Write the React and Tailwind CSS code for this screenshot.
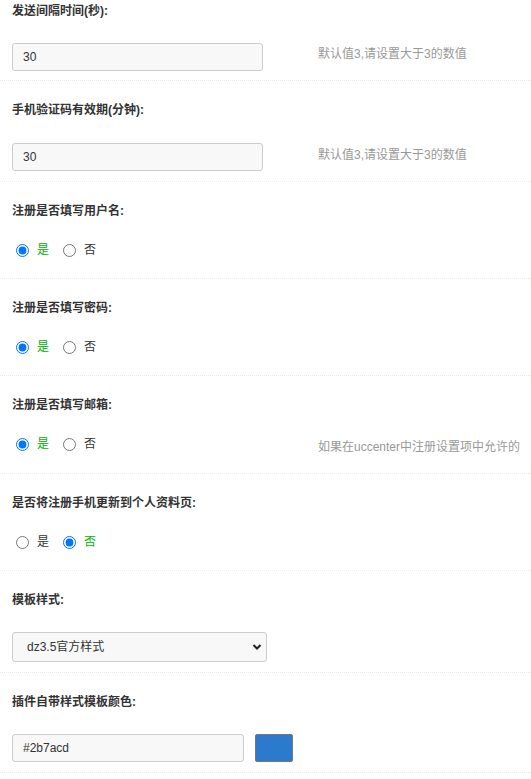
import { useState } from 'react';

const font = { fontFamily: '"Liberation Sans", "Noto Sans CJK SC", sans-serif' };

const Label = ({ children }) => (
  <div className="h-4 text-xs leading-4 font-bold text-[#333]">{children}</div>
);

const Hint = ({ children, className = '' }) => (
  <div className={`absolute left-[306px] whitespace-nowrap text-xs leading-4 text-[#999] ${className}`}>
    {children}
  </div>
);

const TextInput = ({ value, className = 'w-[251px]' }) => (
  <input
    defaultValue={value}
    className={`h-[28px] rounded-[3px] border border-[#ccc] bg-[#f8f8f8] px-[10px] text-xs text-[#333] outline-none ${className}`}
  />
);

const RadioGroup = ({ name, initial }) => {
  const [value, setValue] = useState(initial);
  const opt = (v, text, extra) => (
    <label className={`flex items-center ${extra}`}>
      <input
        type="radio"
        name={name}
        checked={value === v}
        onChange={() => setValue(v)}
        className="m-0 h-[13px] w-[13px]"
      />
      <span className={`ml-[8px] text-xs leading-4 ${value === v ? 'text-[#00b400]' : 'text-[#333]'}`}>{text}</span>
    </label>
  );
  return (
    <div className="flex h-4 items-center pl-[4px]">
      {opt('1', '是', '')}
      {opt('0', '否', 'ml-[14px]')}
    </div>
  );
};

const Row = ({ children, className = '' }) => (
  <div className={`relative border-b border-dotted border-[#dcecf8] px-3 ${className}`}>{children}</div>
);

export default function App() {
  return (
    <div className="w-full overflow-hidden bg-white" style={font}>
      <Row className="pt-[3px] pb-[9px]">
        <Label>发送间隔时间(秒):</Label>
        <div className="relative mt-6 flex items-center">
          <TextInput value="30" />
          <Hint className="top-[3px]">默认值3,请设置大于3的数值</Hint>
        </div>
      </Row>

      <Row className="pt-[21px] pb-[10px]">
        <Label>手机验证码有效期(分钟):</Label>
        <div className="relative mt-[25px] flex items-center">
          <TextInput value="30" />
          <Hint className="top-[4px]">默认值3,请设置大于3的数值</Hint>
        </div>
      </Row>

      <Row className="pt-[21px] pb-[20px]">
        <Label>注册是否填写用户名:</Label>
        <div className="mt-[23px]">
          <RadioGroup name="username" initial="1" />
        </div>
      </Row>

      <Row className="pt-[21px] pb-[20px]">
        <Label>注册是否填写密码:</Label>
        <div className="mt-[23px]">
          <RadioGroup name="password" initial="1" />
        </div>
      </Row>

      <Row className="pt-[21px] pb-[21px]">
        <Label>注册是否填写邮箱:</Label>
        <div className="relative mt-[23px]">
          <RadioGroup name="email" initial="1" />
          <Hint className="top-[3px]">如果在uccenter中注册设置项中允许的</Hint>
        </div>
      </Row>

      <Row className="pt-[21px] pb-[20px]">
        <Label>是否将注册手机更新到个人资料页:</Label>
        <div className="mt-[23px]">
          <RadioGroup name="profile" initial="0" />
        </div>
      </Row>

      <Row className="pt-[21px] pb-[10px]">
        <Label>模板样式:</Label>
        <div className="relative mt-6 w-[255px]">
          <select
            defaultValue="dz35"
            className="h-[30px] w-full appearance-none rounded-[3px] border border-[#ccc] bg-[#f8f8f8] pl-[14px] text-xs text-[#333] outline-none"
          >
            <option value="dz35">dz3.5官方样式</option>
          </select>
          <svg
            className="pointer-events-none absolute right-[5px] top-[11px]"
            width="10"
            height="8"
            viewBox="0 0 10 8"
          >
            <path d="M1.5 2 L5 5.5 L8.5 2" fill="none" stroke="#222" strokeWidth="2" />
          </svg>
        </div>
      </Row>

      <Row className="pt-[21px] pb-[10px]">
        <Label>插件自带样式模板颜色:</Label>
        <div className="mt-6 flex items-center">
          <TextInput value="#2b7acd" className="w-[232px]" />
          <div className="ml-[11px] h-[28px] w-[38px] rounded-[2px] border border-[#777] bg-[#2b7acd]" />
        </div>
      </Row>
    </div>
  );
}
